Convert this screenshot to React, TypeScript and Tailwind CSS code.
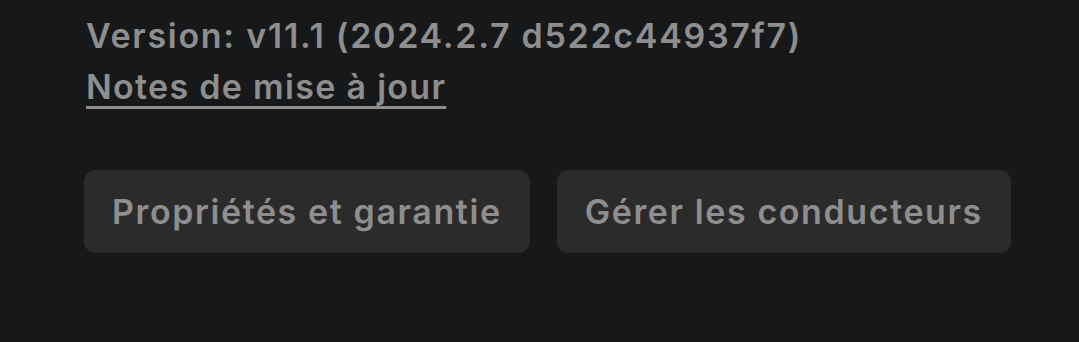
export default function App() {
  return (
    <div
      className="min-h-screen w-full bg-[#17181a] text-[#8e8e8e]"
      style={{ fontFamily: 'Inter, "Noto Sans", sans-serif' }}
    >
      <div className="pl-[86px] pt-[15px]">
        <div className="text-[34px] font-semibold leading-[42px] tracking-[1.7px]">
          Version: v11.1 (2024.2.7 d522c44937f7)
        </div>
        <a className="mt-[9px] block w-fit text-[34px] font-semibold leading-[42px] tracking-[1.3px] underline decoration-[3px] underline-offset-[7px]">
          Notes de mise à jour
        </a>
      </div>
      <div className="mt-[62px] flex gap-[27px] pl-[84px]">
        <button className="h-[83px] rounded-[12px] bg-[#2b2b2b] px-[28px] text-[34px] font-semibold tracking-[1.6px] text-[#8e8e8e]">
          Propriétés et garantie
        </button>
        <button className="h-[83px] rounded-[12px] bg-[#2b2b2b] px-[28px] text-[34px] font-semibold tracking-[1.6px] text-[#8e8e8e]">
          Gérer les conducteurs
        </button>
      </div>
    </div>
  )
}
